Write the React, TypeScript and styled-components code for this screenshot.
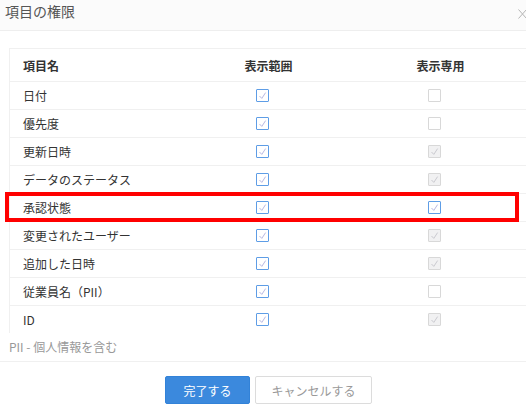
import React from 'react';
import styled, { createGlobalStyle } from 'styled-components';

type Mark = 'on' | 'off' | 'locked';

interface FieldRow {
  name: string;
  scope: Mark;
  readOnly: Mark;
}

const rows: FieldRow[] = [
  { name: '日付', scope: 'on', readOnly: 'off' },
  { name: '優先度', scope: 'on', readOnly: 'off' },
  { name: '更新日時', scope: 'on', readOnly: 'locked' },
  { name: 'データのステータス', scope: 'on', readOnly: 'locked' },
  { name: '承認状態', scope: 'on', readOnly: 'on' },
  { name: '変更されたユーザー', scope: 'on', readOnly: 'locked' },
  { name: '追加した日時', scope: 'on', readOnly: 'locked' },
  { name: '従業員名（PII）', scope: 'on', readOnly: 'off' },
  { name: 'ID', scope: 'on', readOnly: 'locked' },
];

const GlobalStyle = createGlobalStyle`
  html, body {
    margin: 0;
    padding: 0;
    background: #fff;
    overflow: hidden;
  }
  body {
    font-family: "Noto Sans CJK JP", "Noto Sans", sans-serif;
    color: #333;
  }
`;

const Checkbox = ({ mark }: { mark: Mark }) => (
  <Box $mark={mark}>
    {mark !== 'off' && (
      <svg width="11" height="11" viewBox="0 0 11 11">
        <polyline
          points="2.5,6 4.8,8.4 8.6,2.6"
          fill="none"
          stroke={mark === 'on' ? '#b8b8e2' : '#cacad0'}
          strokeWidth="1"
        />
      </svg>
    )}
  </Box>
);

const App = () => {
  return (
    <>
      <GlobalStyle />
      <Modal>
        <Header>
          <Title>項目の権限</Title>
          <Close aria-label="close">
            <svg width="9" height="10" viewBox="0 0 9 10">
              <path d="M0.5 0.5 L8.5 9.5 M8.5 0.5 L0.5 9.5" stroke="#b5b5b5" strokeWidth="1" />
            </svg>
          </Close>
        </Header>

        <Body>
          <TableWrap>
            <Table>
              <colgroup>
                <Col $width={173} />
                <Col $width={172} />
                <Col $width={172} />
              </colgroup>
              <thead>
                <tr>
                  <Th $align="left">項目名</Th>
                  <Th $align="center">表示範囲</Th>
                  <Th $align="center">表示専用</Th>
                </tr>
              </thead>
              <tbody>
                {rows.map((row) => (
                  <tr key={row.name}>
                    <Td $align="left">{row.name}</Td>
                    <Td $align="center">
                      <Checkbox mark={row.scope} />
                    </Td>
                    <Td $align="center">
                      <Checkbox mark={row.readOnly} />
                    </Td>
                  </tr>
                ))}
              </tbody>
            </Table>
            {/* red outline around the 承認状態 row */}
            <Highlight />
          </TableWrap>
          <Note>PII - 個人情報を含む</Note>
        </Body>

        <Footer>
          <Button $primary>完了する</Button>
          <Button>キャンセルする</Button>
        </Footer>
      </Modal>
    </>
  );
};

const Modal = styled.div`
  width: 537px;
  background: #fff;
`;

const Header = styled.div`
  height: 29px;
  padding: 1px 11px 0 5px;
  display: flex;
  align-items: flex-start;
  justify-content: space-between;
  background: #fbfbfb;
  border-bottom: 1px solid #eeeeee;
`;

const Title = styled.div`
  font-size: 14px;
  line-height: 20px;
  color: #555;
`;

const Close = styled.span`
  display: flex;
  margin-top: 8px;
  margin-right: -1px;
`;

const Body = styled.div`
  padding: 17px 11px 4px 9px;
`;

const TableWrap = styled.div`
  position: relative;
`;

const Table = styled.table`
  width: 517px;
  table-layout: fixed;
  border-collapse: collapse;
  border-top: 1px solid #f0f0f0;
  border-left: 1px solid #f0f0f0;
  font-size: 12px;

  tbody tr:last-child td {
    border-bottom: none;
  }
`;

const Col = styled.col<{ $width: number }>`
  width: ${(p) => p.$width}px;
`;

const Th = styled.th<{ $align: 'left' | 'center' }>`
  height: 32px;
  padding: 0 0 0 ${(p) => (p.$align === 'left' ? '13px' : '0')};
  text-align: ${(p) => p.$align};
  font-weight: bold;
  color: #333;
  border-bottom: 1px solid #f0f0f0;
`;

const Td = styled.td<{ $align: 'left' | 'center' }>`
  height: 27px;
  padding: 0 0 0 ${(p) => (p.$align === 'left' ? '13px' : '0')};
  text-align: ${(p) => p.$align};
  color: #333;
  border-bottom: 1px solid #f0f0f0;
  line-height: ${(p) => (p.$align === 'left' ? '27px' : '0')};
  white-space: nowrap;
`;

const Box = styled.span<{ $mark: Mark }>`
  display: inline-flex;
  vertical-align: middle;
  width: 11px;
  height: 11px;
  margin-right: 12px;
  border: 1px solid ${(p) => (p.$mark === 'on' ? '#5e9de6' : '#d8d8d8')};
  background: ${(p) => (p.$mark === 'locked' ? '#f1f1f2' : '#fff')};
  border-radius: 1px;
`;

const Highlight = styled.div`
  position: absolute;
  left: -4px;
  top: 144px;
  width: 514px;
  height: 30px;
  box-sizing: border-box;
  border: 4px solid #ff0000;
  pointer-events: none;
`;

const Note = styled.div`
  padding-top: 4px;
  font-size: 12px;
  line-height: 20px;
  color: #999;
`;

const Footer = styled.div`
  display: flex;
  justify-content: center;
  gap: 5px;
  padding-top: 14px;
  border-top: 1px solid #f0f0f0;
`;

const Button = styled.button<{ $primary?: boolean }>`
  height: 28px;
  padding: 0;
  width: ${(p) => (p.$primary ? '85px' : '117px')};
  font-family: "Noto Sans CJK JP", "Noto Sans", sans-serif;
  font-size: 12px;
  border-radius: 2px;
  border: 1px solid ${(p) => (p.$primary ? '#3282d8' : '#dcdcdc')};
  background: ${(p) => (p.$primary ? '#3b89dd' : '#fff')};
  color: ${(p) => (p.$primary ? '#fff' : '#999')};
`;

export default App;
